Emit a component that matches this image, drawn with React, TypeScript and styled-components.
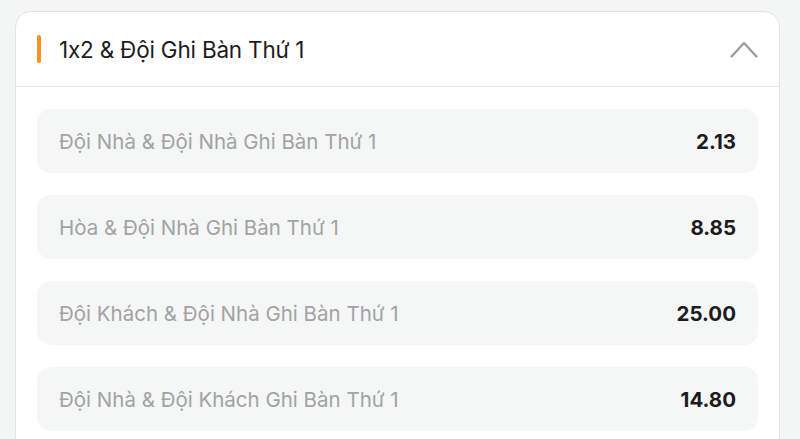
import styled, { createGlobalStyle } from "styled-components";

type Outcome = {
  label: string;
  odds: string;
};

const outcomes: Outcome[] = [
  { label: "Đội Nhà & Đội Nhà Ghi Bàn Thứ 1", odds: "2.13" },
  { label: "Hòa & Đội Nhà Ghi Bàn Thứ 1", odds: "8.85" },
  { label: "Đội Khách & Đội Nhà Ghi Bàn Thứ 1", odds: "25.00" },
  { label: "Đội Nhà & Đội Khách Ghi Bàn Thứ 1", odds: "14.80" },
];

const GlobalStyle = createGlobalStyle`
  html, body {
    margin: 0;
    padding: 0;
    background: #f4f5f5;
    font-family: Inter, "Noto Sans", "Liberation Sans", sans-serif;
  }
`;

const Page = styled.div`
  padding: 11px 20px 0 15px;
  height: 439px;
  box-sizing: border-box;
  overflow: hidden;
`;

const Card = styled.section`
  background: #ffffff;
  border: 1px solid #e2e3e3;
  border-radius: 16px;
  overflow: hidden;
`;

const Header = styled.div`
  display: flex;
  align-items: center;
  height: 74px;
  padding: 0 21px 0 21px;
  border-bottom: 1px solid #e8e9e9;
`;

const Accent = styled.span`
  width: 4px;
  height: 28px;
  border-radius: 2px;
  background: #f7941d;
  flex-shrink: 0;
`;

const Title = styled.h2`
  margin: 0 0 0 18px;
  flex: 1;
  font-size: 22.5px;
  font-weight: 400;
  color: #1c1c1e;
  letter-spacing: -0.2px;
`;

const Toggle = styled.button`
  border: none;
  background: none;
  padding: 0;
  display: flex;
  color: #9a9a9a;
  cursor: pointer;
`;

const List = styled.div`
  display: flex;
  flex-direction: column;
  gap: 22px;
  padding: 22px 21px 22px 21px;
`;

const Row = styled.div`
  display: flex;
  align-items: center;
  justify-content: space-between;
  height: 64px;
  padding: 0 22px;
  border-radius: 14px;
  background: #f5f6f6;
`;

const Label = styled.span`
  font-size: 20.5px;
  color: #a3a3a3;
`;

const Odds = styled.span`
  font-size: 20.5px;
  font-weight: 700;
  color: #1c1c1e;
`;

export default function App() {
  return (
    <>
      <GlobalStyle />
      <Page>
        <Card>
          <Header>
            <Accent />
            <Title>1x2 &amp; Đội Ghi Bàn Thứ 1</Title>
            <Toggle aria-label="Thu gọn">
              <svg width="28" height="18" viewBox="0 0 28 18" fill="none">
                <path
                  d="M1.5 16.5 L14 3 L26.5 16.5"
                  stroke="currentColor"
                  strokeWidth="2.2"
                  strokeLinecap="round"
                  strokeLinejoin="round"
                />
              </svg>
            </Toggle>
          </Header>
          <List>
            {outcomes.map((o) => (
              <Row key={o.label}>
                <Label>{o.label}</Label>
                <Odds>{o.odds}</Odds>
              </Row>
            ))}
          </List>
        </Card>
      </Page>
    </>
  );
}
